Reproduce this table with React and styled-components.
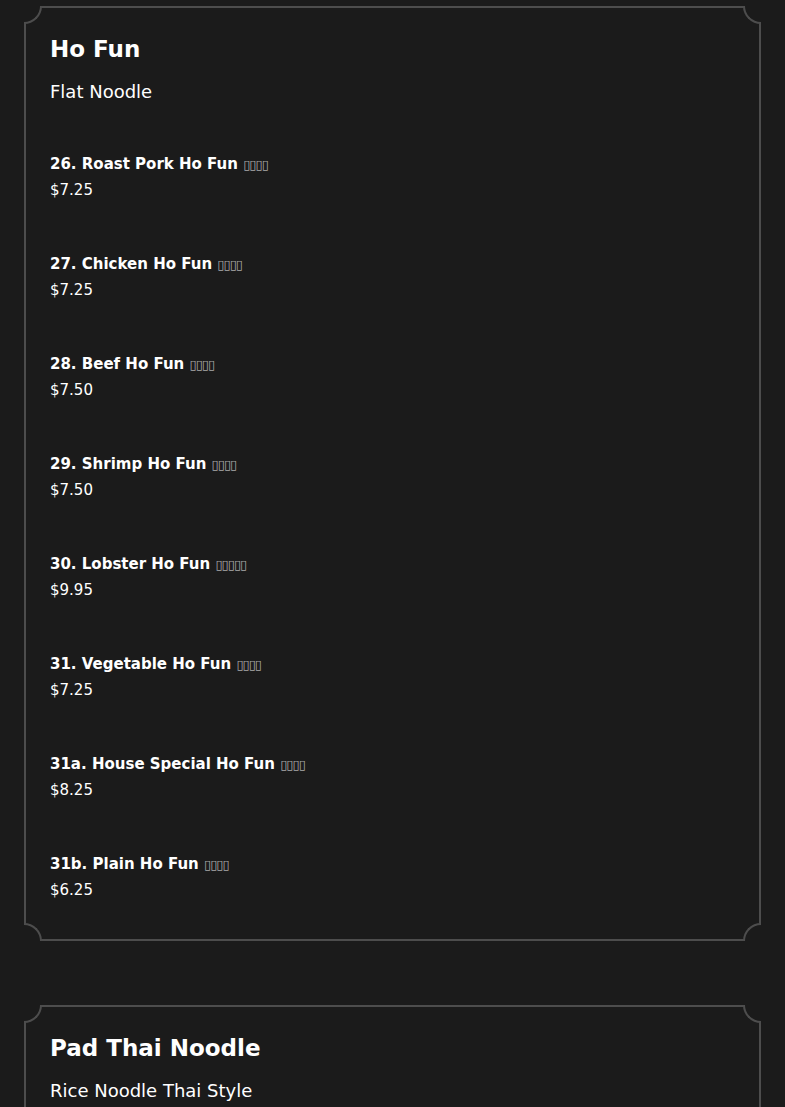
import styled, { createGlobalStyle } from "styled-components";

const GlobalStyle = createGlobalStyle`
  body {
    margin: 0;
    background: #1b1b1b;
    color: #fff;
    font-family: "DejaVu Sans", "Noto Sans", sans-serif;
  }
`;

const sections = [
  {
    title: "Ho Fun",
    subtitle: "Flat Noodle",
    items: [
      { name: "26. Roast Pork Ho Fun", zh: 4, price: "$7.25" },
      { name: "27. Chicken Ho Fun", zh: 4, price: "$7.25" },
      { name: "28. Beef Ho Fun", zh: 4, price: "$7.50" },
      { name: "29. Shrimp Ho Fun", zh: 4, price: "$7.50" },
      { name: "30. Lobster Ho Fun", zh: 5, price: "$9.95" },
      { name: "31. Vegetable Ho Fun", zh: 4, price: "$7.25" },
      { name: "31a. House Special Ho Fun", zh: 4, price: "$8.25" },
      { name: "31b. Plain Ho Fun", zh: 4, price: "$6.25" },
    ],
  },
  {
    title: "Pad Thai Noodle",
    subtitle: "Rice Noodle Thai Style",
    items: [
      { name: "32. Chicken Pad Thai", zh: 4, price: "$7.95" },
      { name: "33. Shrimp Pad Thai", zh: 4, price: "$8.50" },
    ],
  },
];

const App = () => {
  return (
    <>
      <GlobalStyle />
      <Page>
        {sections.map((s) => (
          <Card key={s.title}>
            <Corner $pos="tl" />
            <Corner $pos="tr" />
            <Corner $pos="bl" />
            <Corner $pos="br" />
            <Title>{s.title}</Title>
            <Subtitle>{s.subtitle}</Subtitle>
            <ItemList>
              {s.items.map((it) => (
                <Item key={it.name}>
                  <ItemName>
                    {it.name} <Zh>{"▯".repeat(it.zh)}</Zh>
                  </ItemName>
                  <Price>{it.price}</Price>
                </Item>
              ))}
            </ItemList>
          </Card>
        ))}
      </Page>
    </>
  );
};

const Page = styled.main`
  padding: 6px 24px 40px;
  display: flex;
  flex-direction: column;
  gap: 64px;
`;

const Card = styled.section`
  position: relative;
  border: 2px solid #4d4d4d;
  padding: 26px 24px 36px;
`;

const cornerStyles = {
  tl: `top:-2px;left:-2px;border-right:2px solid #4d4d4d;border-bottom:2px solid #4d4d4d;border-bottom-right-radius:20px;`,
  tr: `top:-2px;right:-2px;border-left:2px solid #4d4d4d;border-bottom:2px solid #4d4d4d;border-bottom-left-radius:20px;`,
  bl: `bottom:-2px;left:-2px;border-right:2px solid #4d4d4d;border-top:2px solid #4d4d4d;border-top-right-radius:20px;`,
  br: `bottom:-2px;right:-2px;border-left:2px solid #4d4d4d;border-top:2px solid #4d4d4d;border-top-left-radius:20px;`,
};

const Corner = styled.span`
  position: absolute;
  width: 16px;
  height: 16px;
  background: #1b1b1b;
  ${({ $pos }) => cornerStyles[$pos]}
`;

const Title = styled.h2`
  margin: 0;
  font-size: 23px;
  line-height: 30px;
  font-weight: 700;
`;

const Subtitle = styled.p`
  margin: 16px 0 0;
  font-size: 18px;
  line-height: 24px;
`;

const ItemList = styled.div`
  margin-top: 47px;
  display: flex;
  flex-direction: column;
  gap: 48px;
`;

const Item = styled.div``;

const ItemName = styled.div`
  font-size: 15px;
  line-height: 26px;
  font-weight: 700;
`;

const Zh = styled.span`
  font-size: 13px;
  line-height: 1;
  font-weight: 400;
  color: #aaa;
  letter-spacing: -1px;
`;

const Price = styled.div`
  font-size: 15px;
  line-height: 26px;
`;

export default App;
